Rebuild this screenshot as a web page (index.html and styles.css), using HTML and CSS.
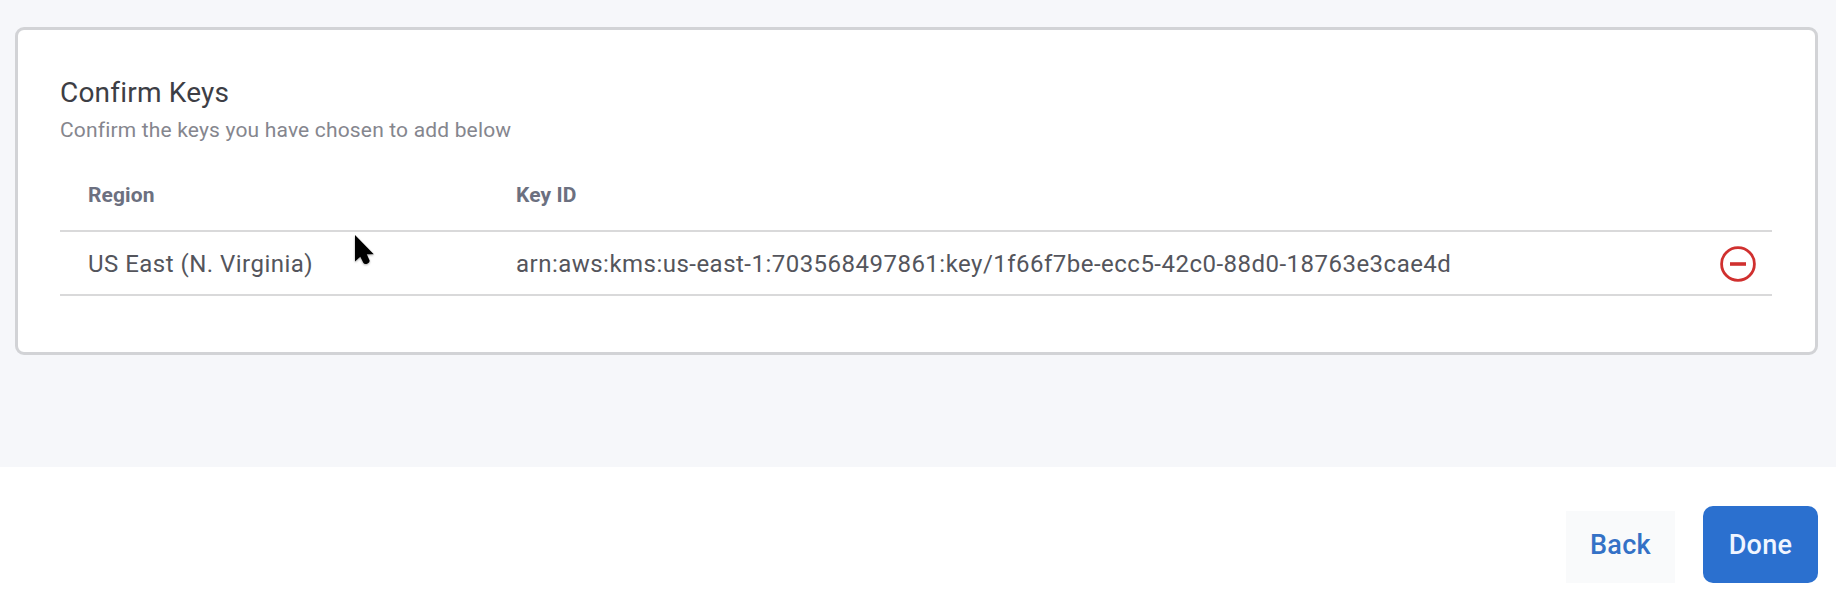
FILE: index.html
```html
<!DOCTYPE html>
<html lang="en">
<head>
<meta charset="utf-8">
<title>Confirm Keys</title>
<link rel="stylesheet" href="styles.css">
</head>
<body>
<main class="content">
  <section class="card">
    <h1 class="title">Confirm Keys</h1>
    <p class="subtitle">Confirm the keys you have chosen to add below</p>
    <div class="table">
      <div class="row head">
        <span>Region</span>
        <span>Key ID</span>
      </div>
      <div class="row entry">
        <span>US East (N. Virginia)</span>
        <span class="arn">arn:aws:kms:us-east-1:703568497861:key/1f66f7be-ecc5-42c0-88d0-18763e3cae4d</span>
        <svg class="remove" viewBox="0 0 36 36" fill="none" stroke="#d0302f">
          <circle cx="18" cy="18" r="16.4" stroke-width="2.8"/>
          <path d="M10 18H26" stroke-width="3.6"/>
        </svg>
      </div>
    </div>
  </section>
</main>
<footer class="actions">
  <button class="btn back">Back</button>
  <button class="btn done">Done</button>
</footer>
<svg class="cursor" viewBox="0 0 24 34">
  <path d="M3 2V28.5L8.3 23.7L11.3 29.7Q12.5 31.7 15.2 30.7Q18.3 29.3 17.5 27.3L14.8 21.3H21.8Z" fill="#000"/>
</svg>
</body>
</html>
```

FILE: styles.css
```css
* { box-sizing: border-box; }
body {
  margin: 0;
  height: 596px;
  overflow: hidden;
  background: #fff;
  font-family: Roboto, "Liberation Sans", sans-serif;
  color: #54555c;
}
.content {
  height: 467px;
  padding: 27px 18px 0 15px;
  background: #f6f7fa;
}
.card {
  height: 328px;
  padding: 47px 43px 0 42px;
  background: #fff;
  border: 3px solid #d2d3d6;
  border-radius: 9px;
}
.title {
  margin: 0;
  font-size: 28px;
  line-height: 32px;
  font-weight: 400;
  letter-spacing: 0.2px;
  color: #3d3e45;
}
.subtitle {
  margin: 6px 0 0;
  font-size: 21px;
  line-height: 30px;
  letter-spacing: 0.17px;
  color: #85868e;
}
.row {
  display: grid;
  grid-template-columns: 428px 1fr 36px;
  align-items: center;
  padding: 0 16px 0 28px;
  border-bottom: 2px solid #d9d9da;
}
.head {
  height: 87px;
  padding-top: 14px;
  font-size: 21px;
  font-weight: 700;
  letter-spacing: 0.1px;
  color: #6c7080;
}
.entry {
  height: 64px;
  padding-top: 2px;
  font-size: 24px;
  letter-spacing: 0.48px;
}
.remove {
  width: 36px;
  height: 36px;
}
.actions {
  display: flex;
  align-items: flex-start;
  justify-content: flex-end;
  gap: 28px;
  height: 129px;
  padding: 26px 18px 0 0;
}
.btn {
  padding: 0;
  border: 0;
  font: 500 27px/32px Roboto, "Liberation Sans", sans-serif;
  letter-spacing: 0.3px;
}
.back {
  width: 109px;
  height: 72px;
  margin-top: 18px;
  padding-bottom: 5px;
  background: #f9fafb;
  color: #3471c6;
}
.done {
  width: 115px;
  height: 77px;
  margin-top: 13px;
  border-radius: 10px;
  background: #2b70cf;
  color: #f0f5ff;
}
.cursor {
  position: absolute;
  left: 352px;
  top: 233px;
  width: 24px;
  height: 34px;
  filter: drop-shadow(0 1px 1px rgba(0, 0, 0, 0.35));
}
```
